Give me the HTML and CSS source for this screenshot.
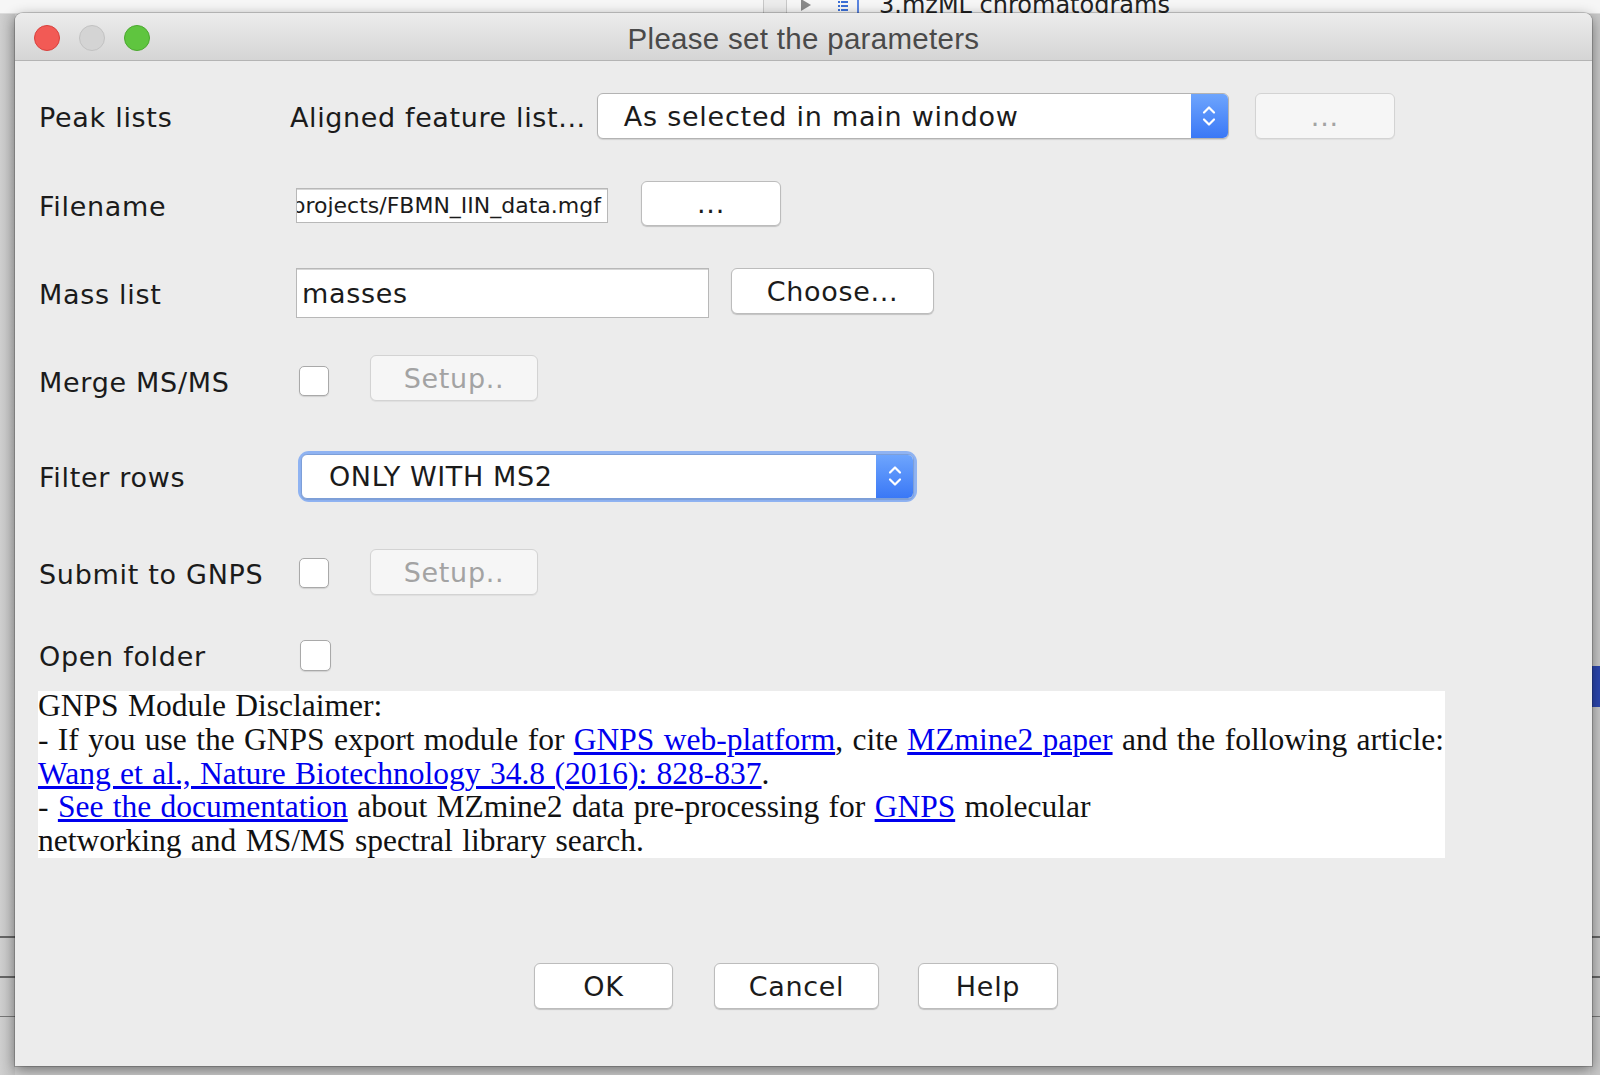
FILE: index.html
```html
<!DOCTYPE html>
<html lang="en">
<head>
<meta charset="utf-8">
<title>Please set the parameters</title>
<link rel="stylesheet" href="styles.css">
</head>
<body>
<div class="desktop">
  <div class="bg-top">
    <span class="bg-cell"></span>
    <span class="bg-tri"></span>
    <svg class="bg-list" width="12" height="12" viewBox="0 0 12 12"><g fill="#3b6fd6"><rect x="1" y="1" width="2" height="2"/><rect x="4" y="1" width="7" height="2"/><rect x="1" y="5" width="2" height="2"/><rect x="4" y="5" width="7" height="2"/><rect x="1" y="9" width="2" height="2"/><rect x="4" y="9" width="7" height="2"/></g></svg>
    <span class="bg-sep"></span>
    <span class="bg-text">3.mzML chromatograms</span>
  </div>
  <div class="bg-blue"></div>

  <div class="dialog">
    <div class="titlebar">
      <div class="lights">
        <span class="light red"></span>
        <span class="light grey"></span>
        <span class="light green"></span>
      </div>
      <div class="title">Please set the parameters</div>
      <div></div>
    </div>

    <div class="content">
      <div class="form">
        <div class="label">Peak lists</div>
        <div class="field">
          <span class="sublabel">Aligned feature list...</span>
          <div class="combo combo-wide">
            <span class="combo-text">As selected in main window</span>
            <span class="combo-arrow"><svg width="16" height="28" viewBox="0 0 16 28"><path d="M3 10.5 L8 5.5 L13 10.5 M3 17.5 L8 22.5 L13 17.5" fill="none" stroke="#fff" stroke-width="2.2" stroke-linecap="round" stroke-linejoin="round"/></svg></span>
          </div>
          <button class="btn btn-disabled btn-dots1">...</button>
        </div>

        <div class="label">Filename</div>
        <div class="field">
          <div class="textfield tf-file"><span>projects/FBMN_IIN_data.mgf</span></div>
          <button class="btn btn-dots2">...</button>
        </div>

        <div class="label">Mass list</div>
        <div class="field">
          <div class="textfield tf-mass">masses</div>
          <button class="btn btn-choose">Choose...</button>
        </div>

        <div class="label">Merge MS/MS</div>
        <div class="field">
          <span class="checkbox"></span>
          <button class="btn btn-disabled btn-setup btn-setup-merge">Setup..</button>
        </div>

        <div class="label">Filter rows</div>
        <div class="field">
          <div class="focus-ring">
            <div class="combo combo-filter">
              <span class="combo-text">ONLY WITH MS2</span>
              <span class="combo-arrow"><svg width="16" height="28" viewBox="0 0 16 28"><path d="M3 10.5 L8 5.5 L13 10.5 M3 17.5 L8 22.5 L13 17.5" fill="none" stroke="#fff" stroke-width="2.2" stroke-linecap="round" stroke-linejoin="round"/></svg></span>
            </div>
          </div>
        </div>

        <div class="label">Submit to GNPS</div>
        <div class="field">
          <span class="checkbox"></span>
          <button class="btn btn-disabled btn-setup btn-setup-gnps">Setup..</button>
        </div>

        <div class="label">Open folder</div>
        <div class="field">
          <span class="checkbox checkbox-open"></span>
        </div>
      </div>

      <div class="disclaimer">
        <div class="disclaimer-text">
          GNPS Module Disclaimer:<br>
          - If you use the GNPS export module for <a href="#">GNPS web-platform</a>, cite <a href="#">MZmine2 paper</a> and the following article:<br>
          <a href="#">Wang et al., Nature Biotechnology 34.8 (2016): 828-837</a>.<br>
          - <a href="#">See the documentation</a> about MZmine2 data pre-processing for <a href="#">GNPS</a> molecular<br>
          networking and MS/MS spectral library search.
        </div>
      </div>

      <div class="actions">
        <button class="btn btn-ok">OK</button>
        <button class="btn btn-cancel">Cancel</button>
        <button class="btn btn-help">Help</button>
      </div>
    </div>
  </div>
</div>
</body>
</html>
```

FILE: styles.css
```css
html, body {
  margin: 0;
  padding: 0;
}

body {
  width: 1600px;
  height: 1075px;
  overflow: hidden;
  background: #9c9c9c;
}

.desktop {
  position: relative;
  width: 1600px;
  height: 1075px;
  background:
    linear-gradient(to bottom, transparent 936px, #666 936px, #666 938px, transparent 938px, transparent 976px, #666 976px, #666 978px, transparent 978px, transparent 1016px, #777 1016px, #777 1017px, transparent 1017px),
    linear-gradient(to right, #cfcfcf 0, #c4c4c4 15px, transparent 15px, transparent 1590px, #c8c8c8 1590px);
  background-color: #cfcfcf;
}

.bg-top {
  height: 13px;
  background: #f6f6f6;
  border-bottom: 1px solid #dcdcdc;
  display: flex;
  align-items: flex-end;
  overflow: hidden;
  padding-left: 763px;
  font-family: "DejaVu Sans", sans-serif;
}

.bg-cell {
  width: 22px;
  height: 13px;
  border-left: 1px solid #c8c8c8;
  border-right: 1px solid #c8c8c8;
  background: #ececec;
}

.bg-tri {
  width: 0;
  height: 0;
  margin-left: 14px;
  margin-bottom: 2px;
  border-left: 10px solid #8a8a8a;
  border-top: 6px solid transparent;
  border-bottom: 6px solid transparent;
}

.bg-list {
  margin-left: 26px;
  margin-bottom: 1px;
}

.bg-sep {
  width: 2px;
  height: 13px;
  background: #5b85e0;
  margin-left: 8px;
}

.bg-text {
  margin-left: 20px;
  font-size: 24px;
  line-height: 13px;
  height: 13px;
  color: #222;
  position: relative;
  top: -1px;
}

.bg-blue {
  position: absolute;
  left: 1592px;
  top: 666px;
  width: 8px;
  height: 41px;
  background: #2c47b0;
}

/* ---------- dialog ---------- */

.dialog {
  position: absolute;
  left: 15px;
  top: 13px;
  width: 1577px;
  height: 1053px;
  background: #ececec;
  border-radius: 8px 8px 0 0;
  box-shadow: 0 0 0 1px rgba(0,0,0,0.18), 0 4px 14px rgba(0,0,0,0.45);
  overflow: hidden;
  font-family: "DejaVu Sans", "Lucida Grande", sans-serif;
  color: #1b1b1b;
}

.titlebar {
  height: 44px;
  padding-top: 3px;
  border-bottom: 1px solid #b4b4b4;
  background: linear-gradient(to bottom, #ececec, #d5d5d5);
  display: grid;
  grid-template-columns: 1fr auto 1fr;
  align-items: center;
}

.lights {
  display: flex;
  gap: 19px;
  padding-left: 19px;
}

.light {
  width: 26px;
  height: 26px;
  border-radius: 50%;
  box-sizing: border-box;
}

.light.red {
  background: #f25a55;
  border: 1px solid #d8403c;
}

.light.grey {
  background: #d4d4d4;
  border: 1px solid #c2c2c2;
}

.light.green {
  background: #5fc53f;
  border: 1px solid #4aa82e;
}

.title {
  font-family: "Liberation Sans", Arial, sans-serif;
  font-size: 29.5px;
  color: #4a4a4a;
  letter-spacing: 0.3px;
  padding-top: 1px;
}

.content {
  padding-left: 23px;
}

.form {
  display: grid;
  grid-template-columns: 251px 1fr;
  grid-template-rows: 88px 90px 86px 90px 100px 94px 70px;
  padding-top: 11px;
  margin-left: 1px;
}

.label {
  font-size: 27px;
  letter-spacing: 0.7px;
  display: flex;
  align-items: center;
  padding-top: 2px;
}

.field {
  display: flex;
  align-items: center;
}

.sublabel {
  font-size: 27px;
  letter-spacing: 0.62px;
  padding-top: 2px;
  margin-right: 11px;
}

/* combo boxes */
.combo {
  display: flex;
  align-items: stretch;
  background: #fff;
  border: 1px solid #b3b3b3;
  border-radius: 6px;
  box-shadow: 0 1px 1px rgba(0,0,0,0.12);
  box-sizing: border-box;
  overflow: hidden;
}

.combo-text {
  flex: 1;
  display: flex;
  align-items: center;
  font-size: 27px;
  letter-spacing: 0.75px;
}

.combo-arrow {
  width: 37px;
  background: linear-gradient(to bottom, #6ea5fd, #3a78f6);
  display: flex;
  align-items: center;
  justify-content: center;
}

.combo-wide {
  width: 632px;
  height: 46px;
}

.combo-wide .combo-text {
  padding-left: 26px;
  padding-top: 1px;
}

.focus-ring {
  margin-left: 11px;
  border-radius: 8px;
  box-shadow: 0 0 0 3px #8fb3f2;
}

.combo-filter {
  width: 613px;
  height: 45px;
  border-color: #7d9fd8;
}

.combo-filter .combo-text {
  padding-left: 27px;
  letter-spacing: 0.6px;
}

/* text fields */
.textfield {
  background: #fff;
  border: 1px solid #b8b8b8;
  box-shadow: inset 0 1px 0 #d6d6d6;
  box-sizing: border-box;
  display: flex;
  align-items: center;
  overflow: hidden;
}

.tf-file {
  width: 312px;
  height: 35px;
  font-size: 22px;
  justify-content: flex-end;
  padding-right: 6px;
  white-space: nowrap;
}

.tf-mass {
  width: 413px;
  height: 50px;
  font-size: 27px;
  letter-spacing: 0.7px;
  padding-left: 5px;
}

.field .textfield {
  margin-left: 6px;
}

/* buttons */
.btn {
  font-family: "DejaVu Sans", "Lucida Grande", sans-serif;
  font-size: 27px;
  letter-spacing: 0.7px;
  color: #1b1b1b;
  background: #fff;
  border: 1px solid #bcbcbc;
  border-radius: 6px;
  box-shadow: 0 1px 1px rgba(0,0,0,0.18);
  padding: 0;
  height: 46px;
  box-sizing: border-box;
  display: flex;
  align-items: center;
  justify-content: center;
}

.btn-disabled {
  background: #f6f6f6;
  border-color: #d3d3d3;
  color: #a3a3a3;
  box-shadow: 0 1px 1px rgba(0,0,0,0.06);
}

.btn-dots1 {
  width: 140px;
  margin-left: 26px;
}

.btn-dots2 {
  width: 140px;
  height: 45px;
  margin-left: 33px;
  margin-top: -4px;
}

.btn-choose {
  width: 203px;
  margin-left: 22px;
  margin-top: -4px;
}

.btn-setup {
  width: 168px;
  margin-left: 41px;
}

.btn-setup-merge {
  margin-top: -6px;
}

.btn-setup-gnps {
  margin-top: -2px;
}

.checkbox {
  width: 30px;
  height: 30px;
  box-sizing: border-box;
  background: #fff;
  border: 1px solid #a9a9a9;
  border-radius: 5px;
  box-shadow: 0 1px 1px rgba(0,0,0,0.12);
  margin-left: 9px;
}

.checkbox-open {
  margin-left: 10px;
  width: 31px;
  height: 31px;
}

/* disclaimer */
.disclaimer {
  width: 1407px;
  height: 167px;
  box-sizing: border-box;
  background: #fff;
  margin-top: 1px;
  display: flow-root;
}

.disclaimer-text {
  margin-top: -2px;
  font-family: "Liberation Serif", "Times New Roman", serif;
  font-size: 31.5px;
  line-height: 33.8px;
  word-spacing: 1.5px;
  color: #111;
  white-space: nowrap;
}

.disclaimer a {
  color: #0000ee;
  text-decoration: underline;
}

/* bottom buttons */
.actions {
  display: flex;
  justify-content: center;
  margin-left: -23px;
  padding-right: 15px;
  margin-top: 105px;
}

.btn-ok {
  width: 139px;
}

.btn-cancel {
  width: 165px;
  margin-left: 41px;
}

.btn-help {
  width: 140px;
  margin-left: 39px;
}
```
